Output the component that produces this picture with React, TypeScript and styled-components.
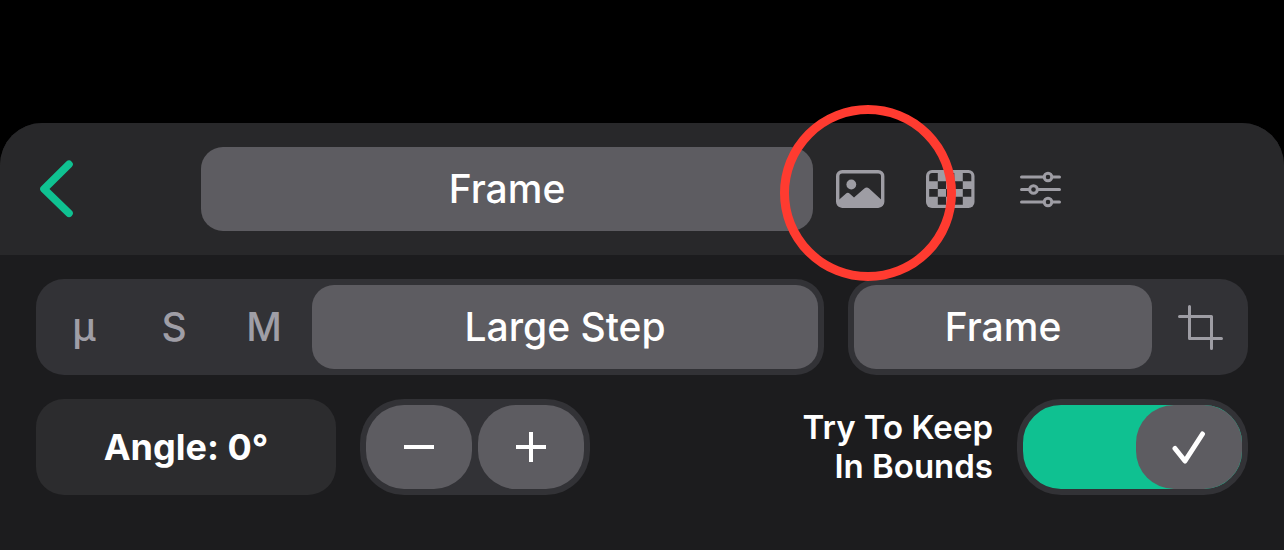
import React, { useState } from "react";
import styled, { createGlobalStyle } from "styled-components";

const GlobalStyle = createGlobalStyle`
  * { box-sizing: border-box; }
  body { margin: 0; background: #000; }
  button { font: inherit; color: inherit; border: 0; padding: 0; background: none; cursor: pointer; }
`;

const Page = styled.div`
  min-height: 100vh;
  padding-top: 123px;
  display: flex;
  flex-direction: column;
  background: #000;
  color: #fff;
  font-family: Inter, "Liberation Sans", sans-serif;
  font-size: 39px;
  font-weight: 500;
  line-height: 48px;
`;

const Panel = styled.main`
  flex: 1;
  background: #1c1c1e;
  border-radius: 42px 42px 0 0;
`;

const Header = styled.header`
  display: grid;
  grid-template-columns: 159px minmax(0, 1fr) 159px;
  align-items: center;
  padding: 18px 36px;
  background: #28282a;
  border-radius: 42px 42px 0 0;
`;

const BackButton = styled.button`
  display: flex;
  justify-self: start;
`;

const Segmented = styled.div<{ $track?: boolean }>`
  display: flex;
  gap: 6px;
  padding: 6px;
  border-radius: 28px;
  background: ${(p) => (p.$track ? "#323236" : "transparent")};
`;

const Segment = styled.button<{ $selected?: boolean }>`
  position: relative;
  display: flex;
  align-items: center;
  justify-content: center;
  flex: ${(p) => (p.$selected ? "1 1 0" : "0 0 84px")};
  height: 84px;
  border-radius: 22px;
  && {
    background: ${(p) => (p.$selected ? "#5d5c61" : "transparent")};
    color: ${(p) => (p.$selected ? "#fff" : "#9f9ea6")};
  }
`;

const Highlight = styled.span`
  position: absolute;
  top: -42px;
  left: -39px;
  z-index: 1;
  width: 176px;
  height: 176px;
  border: 9px solid #ff3b30;
  border-radius: 50%;
  pointer-events: none;
`;

const Controls = styled.div`
  display: flex;
  flex-direction: column;
  gap: 24px;
  padding: 24px 36px 48px;
`;

const StepRow = styled.div`
  display: grid;
  grid-template-columns: minmax(0, 1fr) 400px;
  gap: 24px;
`;

const AngleRow = styled.div`
  display: flex;
  align-items: center;
  gap: 24px;
`;

const AngleValue = styled.button`
  width: 300px;
  height: 96px;
  border-radius: 28px;
  && {
    background: #2c2c2e;
    font-size: 36px;
    font-weight: 700;
  }
`;

const Stepper = styled.div`
  display: flex;
  gap: 6px;
  padding: 6px;
  border-radius: 44px;
  background: #323236;
`;

const StepButton = styled.button`
  display: flex;
  align-items: center;
  justify-content: center;
  width: 106px;
  height: 84px;
  border-radius: 38px;
  && {
    background: #5d5c61;
  }
`;

const BoundsLabel = styled.label`
  display: flex;
  align-items: center;
  gap: 24px;
  margin-left: auto;
  text-align: right;
  font-size: 33px;
  font-weight: 600;
  line-height: 39px;
  cursor: pointer;
`;

const Switch = styled.span<{ $on: boolean }>`
  position: relative;
  display: flex;
  width: 231px;
  height: 96px;
  border: 6px solid #323236;
  border-radius: 44px;
  justify-content: ${(p) => (p.$on ? "flex-end" : "flex-start")};
  background: ${(p) => (p.$on ? "#0fc191" : "#1c1c1e")};
`;

const SwitchInput = styled.input`
  position: absolute;
  inset: 0;
  width: 100%;
  height: 100%;
  margin: 0;
  opacity: 0;
  cursor: pointer;
`;

const Thumb = styled.span`
  display: flex;
  align-items: center;
  justify-content: center;
  width: 106px;
  height: 84px;
  border-radius: 38px;
  background: #5d5c61;
`;

const BackIcon = () => (
  <svg width="40" height="60" viewBox="0 0 40 60" fill="none" stroke="#0fc191" strokeWidth="7.6" strokeLinecap="round" strokeLinejoin="round" aria-hidden="true">
    <path d="M33 5.300 8 30l25 24.300" />
  </svg>
);

const PhotoIcon = () => (
  <svg width="50" height="40" viewBox="0 0 50 40" aria-hidden="true">
    <rect x="1.7" y="2.7" width="45" height="34.5" rx="4.5" fill="none" stroke="#9e9da4" strokeWidth="3.4" />
    <circle cx="15.3" cy="15.5" r="4.9" fill="#9e9da4" />
    <path d="M1 32.5 9.8 24.7q2-1.800 4 0L18 28.6l10.300-9q2.400-2 4.800 0L47 32.200V34q0 4-4 4H5q-4 0-4-4z" fill="#9e9da4" />
  </svg>
);

const CheckerIcon = () => (
  <svg width="50" height="40" viewBox="0 0 50 40" aria-hidden="true">
    <rect x="0" y="1" width="48.500" height="38" rx="6" fill="#9e9da4" />
    <g fill="#28282a">
      <path d="M3.200 12.300V7q0-3 3-3H11.800v8.300zM20 4h8.300v8.300H20zM36.800 4h5.500q3 0 3 3v5.300h-8.500z" />
      <path d="M11.800 12.300H20v7.700h-8.200zM28.300 12.300h8.500V20h-8.500z" />
      <path d="M3.200 20h8.600v7.800H3.200zM20 20h8.300v7.800H20zM36.800 20h8.500v7.800h-8.500z" />
      <path d="M11.800 27.800H20v8h-8.200zM28.300 27.800h8.500v8h-8.500z" />
    </g>
  </svg>
);

const SlidersIcon = () => (
  <svg width="44" height="40" viewBox="0 0 44 40" fill="none" stroke="#9e9da4" strokeWidth="3" strokeLinecap="round" aria-hidden="true">
    <path d="M2.500 8H25M34 8h6.500M2.500 20.500H10.500M19.500 20.500H40.500M2.500 33H25M34 33h6.500" />
    <circle cx="29" cy="8" r="3.800" />
    <circle cx="14.500" cy="20.500" r="3.800" />
    <circle cx="29" cy="33" r="3.800" />
  </svg>
);

const CropIcon = () => (
  <svg width="46" height="46" viewBox="0 0 46 46" fill="none" stroke="#9e9da4" strokeWidth="3" strokeLinecap="round" strokeLinejoin="round" aria-hidden="true">
    <path d="M2.500 12.500h32v32M12.500 2.500v32h32" />
  </svg>
);

const MinusIcon = () => (
  <svg width="30" height="32" viewBox="0 0 30 32" fill="none" stroke="#fff" strokeWidth="4" aria-hidden="true">
    <path d="M0 16h30" />
  </svg>
);

const PlusIcon = () => (
  <svg width="30" height="32" viewBox="0 0 30 32" fill="none" stroke="#fff" strokeWidth="4" aria-hidden="true">
    <path d="M0 16h30M15 1v30" />
  </svg>
);

const CheckIcon = () => (
  <svg width="34" height="34" viewBox="0 0 34 34" fill="none" stroke="#fff" strokeWidth="5" strokeLinecap="round" strokeLinejoin="round" aria-hidden="true">
    <path d="M3 18.500 13 31 30.500 4" />
  </svg>
);

const steps = [
  { short: "µ", long: "Micro Step" },
  { short: "S", long: "Small Step" },
  { short: "M", long: "Medium Step" },
  { short: "L", long: "Large Step" },
];

export default function App() {
  const [step, setStep] = useState(3);
  const [angle, setAngle] = useState(0);
  const [keepInBounds, setKeepInBounds] = useState(true);

  return (
    <Page>
      <GlobalStyle />
      <Panel>
        <Header>
          <BackButton aria-label="Back"><BackIcon /></BackButton>
          <Segmented>
            <Segment $selected aria-pressed>Frame</Segment>
            <Segment aria-label="Image"><PhotoIcon /><Highlight /></Segment>
            <Segment aria-label="Background"><CheckerIcon /></Segment>
            <Segment aria-label="Adjustments"><SlidersIcon /></Segment>
          </Segmented>
        </Header>
        <Controls>
          <StepRow>
            <Segmented $track>
              {steps.map((s, i) => (
                <Segment key={s.short} $selected={i === step} aria-pressed={i === step} aria-label={s.long} onClick={() => setStep(i)}>
                  {i === step ? s.long : s.short}
                </Segment>
              ))}
            </Segmented>
            <Segmented $track>
              <Segment $selected aria-pressed>Frame</Segment>
              <Segment aria-label="Crop"><CropIcon /></Segment>
            </Segmented>
          </StepRow>
          <AngleRow>
            <AngleValue onClick={() => setAngle(0)}>Angle: {angle}°</AngleValue>
            <Stepper>
              <StepButton aria-label="Decrease angle" onClick={() => setAngle(angle - 1)}><MinusIcon /></StepButton>
              <StepButton aria-label="Increase angle" onClick={() => setAngle(angle + 1)}><PlusIcon /></StepButton>
            </Stepper>
            <BoundsLabel>
              <span>Try To Keep<br />In Bounds</span>
              <Switch $on={keepInBounds}>
                <Thumb>{keepInBounds && <CheckIcon />}</Thumb>
                <SwitchInput type="checkbox" role="switch" checked={keepInBounds} onChange={(e) => setKeepInBounds(e.target.checked)} />
              </Switch>
            </BoundsLabel>
          </AngleRow>
        </Controls>
      </Panel>
    </Page>
  );
}
